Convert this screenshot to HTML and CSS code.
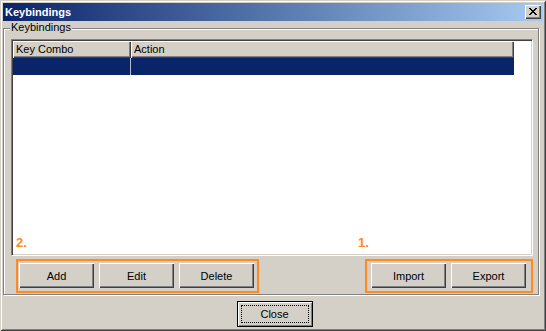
FILE: index.html
```html
<!DOCTYPE html>
<html>
<head>
<meta charset="utf-8">
<title>Keybindings</title>
<link rel="stylesheet" href="styles.css">
</head>
<body>
<div class="window">
  <div class="titlebar">
    <span class="title">Keybindings</span>
    <button class="tb-close" aria-label="Close">
      <svg width="8" height="7" viewBox="0 0 8 7"><path d="M0 0h2v1h-2z M6 0h2v1h-2z M1 1h2v1h-2z M5 1h2v1h-2z M2 2h4v1h-4z M3 3h2v1h-2z M2 4h4v1h-4z M1 5h2v1h-2z M5 5h2v1h-2z M0 6h2v1h-2z M6 6h2v1h-2z" fill="#000"/></svg>
    </button>
  </div>
  <div class="groupbox">
    <span class="group-label">Keybindings</span>
    <div class="listview">
      <div class="lv-header">
        <div class="lv-col c1">Key Combo</div>
        <div class="lv-col c2">Action</div>
      </div>
      <div class="lv-row selected">
        <div class="lv-cell c1"></div>
        <div class="lv-cell c2"></div>
      </div>
      <span class="note note-2">2.</span>
      <span class="note note-1">1.</span>
    </div>
    <div class="button-row">
      <div class="hl hl-left">
        <button class="btn">Add</button>
        <button class="btn">Edit</button>
        <button class="btn">Delete</button>
      </div>
      <div class="hl hl-right">
        <button class="btn">Import</button>
        <button class="btn">Export</button>
      </div>
    </div>
  </div>
  <div class="footer">
    <button class="btn btn-default"><span class="focus">Close</span></button>
  </div>
</div>
</body>
</html>
```
FILE: styles.css
```css
* { box-sizing: border-box; }

body {
  margin: 0;
  background: #d4d0c8;
  font: 11px "Liberation Sans", Arial, sans-serif;
  color: #000;
}

.window {
  width: 546px;
  height: 331px;
  padding: 3px;
  background: #d4d0c8;
  box-shadow: inset 1px 1px 0 #d4d0c8, inset -1px -1px 0 #404040,
              inset 2px 2px 0 #fff, inset -2px -2px 0 #808080;
  display: flex;
  flex-direction: column;
}

.titlebar {
  height: 18px;
  flex: none;
  display: flex;
  align-items: center;
  justify-content: space-between;
  padding: 0 2px 0 2px;
  background: linear-gradient(to right, #0a246a, #a6caf0);
  color: #fff;
  font-weight: bold;
}

.tb-close {
  width: 16px;
  height: 14px;
  border: 0;
  padding: 0 0 1px 0;
  background: #d4d0c8;
  box-shadow: inset 1px 1px 0 #fff, inset -1px -1px 0 #404040, inset -2px -2px 0 #808080;
  display: flex;
  align-items: center;
  justify-content: center;
}
.tb-close svg { display: block; }

.groupbox {
  position: relative;
  margin-top: 7px;
  width: 536px;
  height: 267px;
  flex: none;
  border: 1px solid #808080;
  box-shadow: inset 1px 1px 0 #fff, 1px 1px 0 #fff;
  padding: 10px 5px 1px 7px;
  display: flex;
  flex-direction: column;
}

.group-label {
  position: absolute;
  left: 6px;
  top: -8px;
  padding: 0 1px;
  line-height: 13px;
  background: #d4d0c8;
}

.listview {
  position: relative;
  width: 522px;
  height: 217px;
  flex: none;
  background: #fff;
  border: 1px solid;
  border-color: #808080 #fff #fff #808080;
  box-shadow: inset 1px 1px 0 #404040, inset -1px -1px 0 #d4d0c8;
  padding: 1px;
}

.lv-header, .lv-row {
  display: flex;
  height: 17px;
}

.lv-col {
  background: #d4d0c8;
  box-shadow: inset 1px 1px 0 #fff, inset -1px -1px 0 #404040, inset -2px -2px 0 #808080;
  padding-left: 3px;
  line-height: 17px;
  white-space: nowrap;
}

.c1 { width: 118px; }
.c2 { width: 383px; }

.lv-row.selected { background: #0a246a; width: 501px; }
.lv-row .c1 { border-right: 1px solid #b8bcd0; }

.note {
  position: absolute;
  font-weight: bold;
  font-size: 13px;
  line-height: 13px;
  color: #ff8a20;
  top: 196px;
}
.note-2 { left: 4px; }
.note-1 { left: 346px; }

.button-row {
  display: flex;
  justify-content: space-between;
  margin-top: 3px;
  padding-left: 5px;
  height: 34px;
  flex: none;
}

.hl {
  display: flex;
  gap: 5px;
  border: 2px solid #ff8a20;
}
.hl-left { padding: 2px 3px 3px 1px; }
.hl-right { padding: 2px 5px 3px 4px; }

.btn {
  width: 75px;
  height: 25px;
  border: 0;
  padding: 0;
  background: #d4d0c8;
  box-shadow: inset 1px 1px 0 #fff, inset -1px -1px 0 #404040, inset -2px -2px 0 #808080;
  font: inherit;
  color: #000;
}

.footer {
  display: flex;
  justify-content: center;
  margin-top: 6px;
  padding-left: 3px;
}

.btn-default {
  width: 76px;
  height: 26px;
  border: 1px solid #000;
  padding: 3px;
  box-shadow: inset 1px 1px 0 #fff, inset -1px -1px 0 #808080;
}

.focus {
  display: flex;
  align-items: center;
  justify-content: center;
  width: 100%;
  height: 100%;
  border: 1px dotted #000;
}
```
